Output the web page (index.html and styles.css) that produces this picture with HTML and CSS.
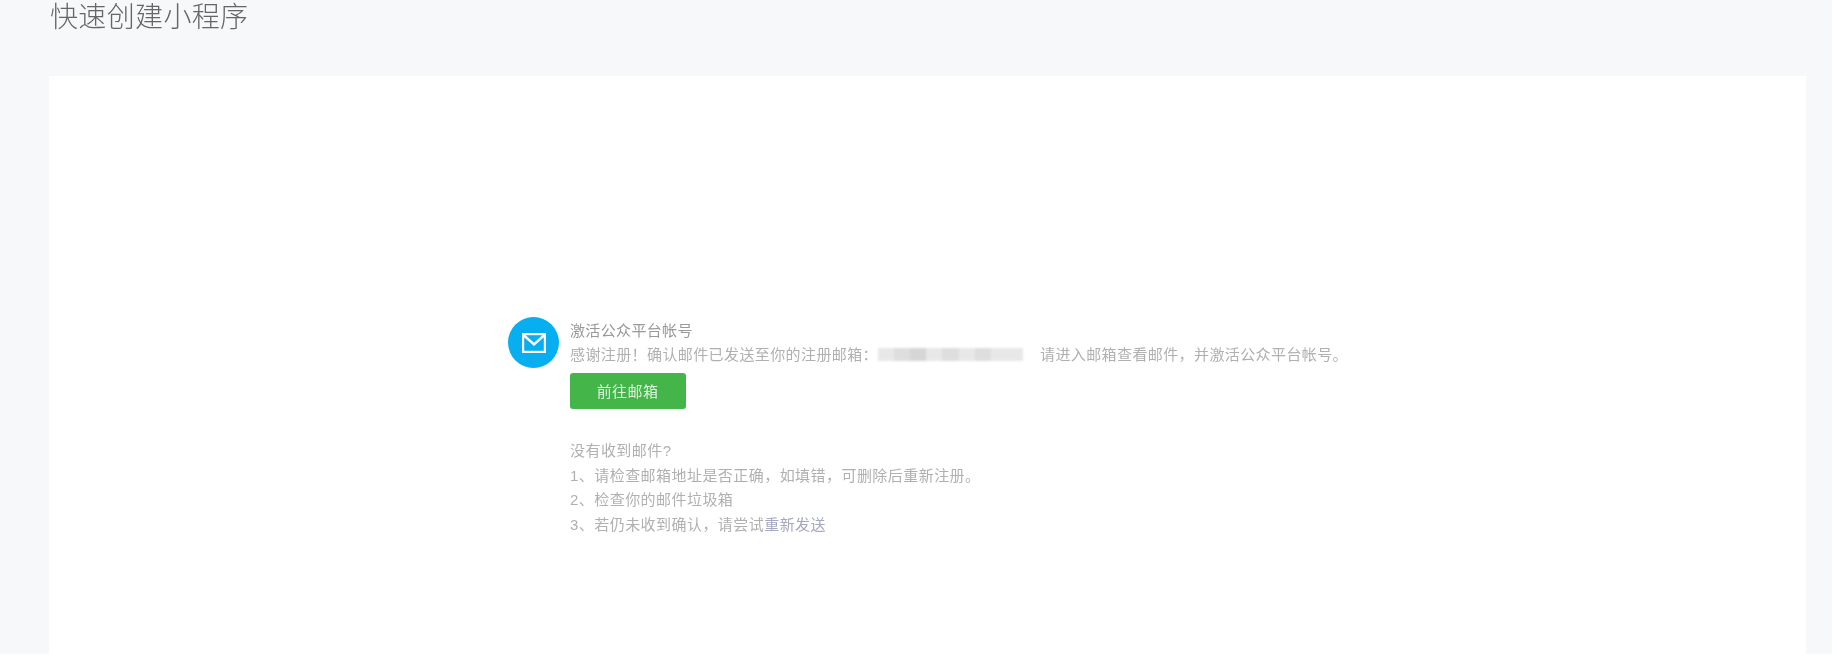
FILE: index.html
```html
<!DOCTYPE html>
<html lang="zh-CN">
<head>
<meta charset="utf-8">
<title>快速创建小程序</title>
<link rel="stylesheet" href="styles.css">
</head>
<body>
<div class="stage">
  <h1 class="page-title">快速创建小程序</h1>
  <main class="card">
    <section class="notice">
      <div class="badge">
        <svg class="badge-icon" viewBox="0 0 24 20" aria-hidden="true">
          <rect x="1" y="1" width="22" height="18" fill="none" stroke="#fff" stroke-width="2.4"/>
          <path d="M1.5 2 L12 11.5 L22.5 2" fill="none" stroke="#fff" stroke-width="2.4"/>
        </svg>
      </div>
      <div class="notice-body">
        <p class="notice-title">激活公众平台帐号</p>
        <p class="notice-line"><span>感谢注册！确认邮件已发送至你的注册邮箱：</span><span class="redacted"><i></i><i class="d"></i><i class="dd"></i><i></i><i class="d"></i><i></i><i class="d"></i><i></i><i></i></span><span>请进入邮箱查看邮件，并激活公众平台帐号。</span></p>
        <a class="btn" href="#">前往邮箱</a>
        <div class="help">
          <p>没有收到邮件?</p>
          <p>1、请检查邮箱地址是否正确，如填错，可删除后重新注册。</p>
          <p>2、检查你的邮件垃圾箱</p>
          <p>3、若仍未收到确认，请尝试<a class="resend" href="#">重新发送</a></p>
        </div>
      </div>
    </section>
  </main>
</div>
</body>
</html>
```
FILE: styles.css
```css
* { box-sizing: border-box; }
html, body { margin: 0; padding: 0; background: #fff; }
body {
  height: 670px;
  overflow: hidden;
  font-family: "Liberation Sans", "Noto Sans CJK SC", sans-serif;
}
.stage {
  width: 1832px;
  height: 654px;
  background: #f6f8f9;
  padding: 0 26px 0 49px;
  overflow: hidden;
}
.page-title {
  margin: 0;
  height: 76px;
  padding: 1px 0 0 1px;
  font-size: 28px;
  line-height: 34px;
  font-weight: 300;
  letter-spacing: 0.35px;
  color: #666;
  filter: blur(0.3px);
}
.card {
  background: #fff;
  height: 578px;
  padding: 241px 0 0 459px;
}
.notice { display: flex; align-items: flex-start; gap: 11px; }
.badge {
  flex: none;
  width: 51px;
  height: 51px;
  border-radius: 50%;
  background: #07aef0;
  display: flex;
  align-items: center;
  justify-content: center;
  filter: blur(0.3px);
}
.badge-icon { width: 24px; height: 20px; }
.notice-body {
  padding-top: 2px;
  font-size: 15px;
  line-height: 24.6px;
  color: #b0b0b0;
}
.notice-title { margin: 0; line-height: 24px; color: #999; letter-spacing: 0.35px; filter: blur(0.4px); }
.notice-line { margin: 0; line-height: 23px; display: flex; align-items: center; letter-spacing: 0.4px; }
.notice-line > span { filter: blur(0.4px); }
.notice-line > .redacted {
  display: flex;
  width: 145px;
  height: 13px;
  margin: 0 17px 0 0;
  background: #e9e9e9;
  filter: blur(1px);
}
.redacted i { flex: 1; background: #e8e8e8; }
.redacted .d { background: #dedede; }
.redacted .dd { background: #d6d6d6; }
.btn {
  display: block;
  width: 116px;
  height: 36px;
  margin: 7px 0 0 -0.5px;
  background: #44b549;
  border-radius: 3px;
  color: #dff2e0;
  text-align: center;
  line-height: 37px;
  letter-spacing: 0.4px;
  text-decoration: none;
  filter: blur(0.3px);
}
.help { margin-top: 30px; letter-spacing: 0.45px; filter: blur(0.4px); }
.help p { margin: 0; }
.resend { color: #a5a8c0; text-decoration: none; }
```
